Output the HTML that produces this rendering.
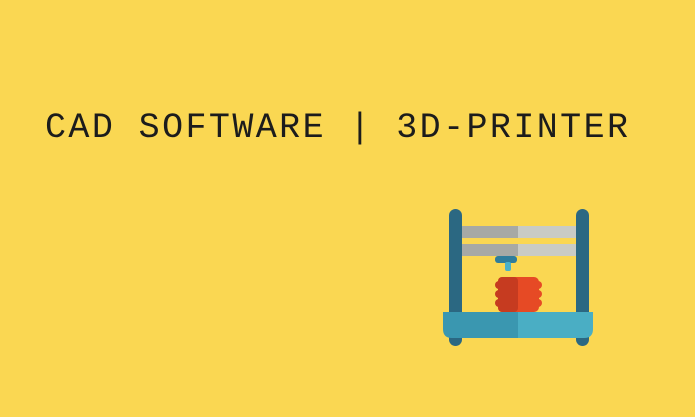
<!DOCTYPE html>
<html><head><style>
html,body{margin:0;padding:0;background:#fad752;}
svg{display:block}
</style></head><body>
<svg width="695" height="417" viewBox="0 0 695 417" xmlns="http://www.w3.org/2000/svg">
<rect width="695" height="417" fill="#fad752"/>
<text x="45" y="137" font-family="Liberation Mono, monospace" font-size="35" fill="#1c1c1c" textLength="583" lengthAdjust="spacing">CAD SOFTWARE | 3D-PRINTER</text>
<!-- poles -->
<rect x="449" y="209" width="13" height="137" rx="6.5" fill="#2b6882"/>
<rect x="576" y="209" width="13" height="137" rx="6.5" fill="#2b6882"/>
<!-- bars -->
<rect x="462" y="226" width="56" height="12" fill="#a7a9a5"/>
<rect x="518" y="226" width="58" height="12" fill="#c9cbc5"/>
<rect x="462" y="244" width="56" height="12" fill="#a7a9a5"/>
<rect x="518" y="244" width="58" height="12" fill="#c9cbc5"/>
<!-- nozzle -->
<rect x="495" y="256" width="22" height="7" rx="3" fill="#2f7d9c"/>
<rect x="505" y="262" width="6" height="9" rx="2" fill="#4ab1c9"/>
<!-- red part -->
<g>
<rect x="498" y="277" width="41" height="35" rx="5" fill="#e64a25"/>
<circle cx="499" cy="285" r="4" fill="#c63b20"/><circle cx="499" cy="294" r="4" fill="#c63b20"/><circle cx="499" cy="303" r="4" fill="#c63b20"/>
<circle cx="538" cy="285" r="4" fill="#e64a25"/><circle cx="538" cy="294" r="4" fill="#e64a25"/><circle cx="538" cy="303" r="4" fill="#e64a25"/>
<rect x="498" y="277" width="20" height="35" rx="4" fill="#c63b20"/>
</g>
<!-- base -->
<path d="M443 312 H518 V338 H452 Q443 338 443 329 Z" fill="#3a97b0"/>
<path d="M518 312 H593 V329 Q593 338 584 338 H518 Z" fill="#4aaec4"/>
</svg>
</body></html>
